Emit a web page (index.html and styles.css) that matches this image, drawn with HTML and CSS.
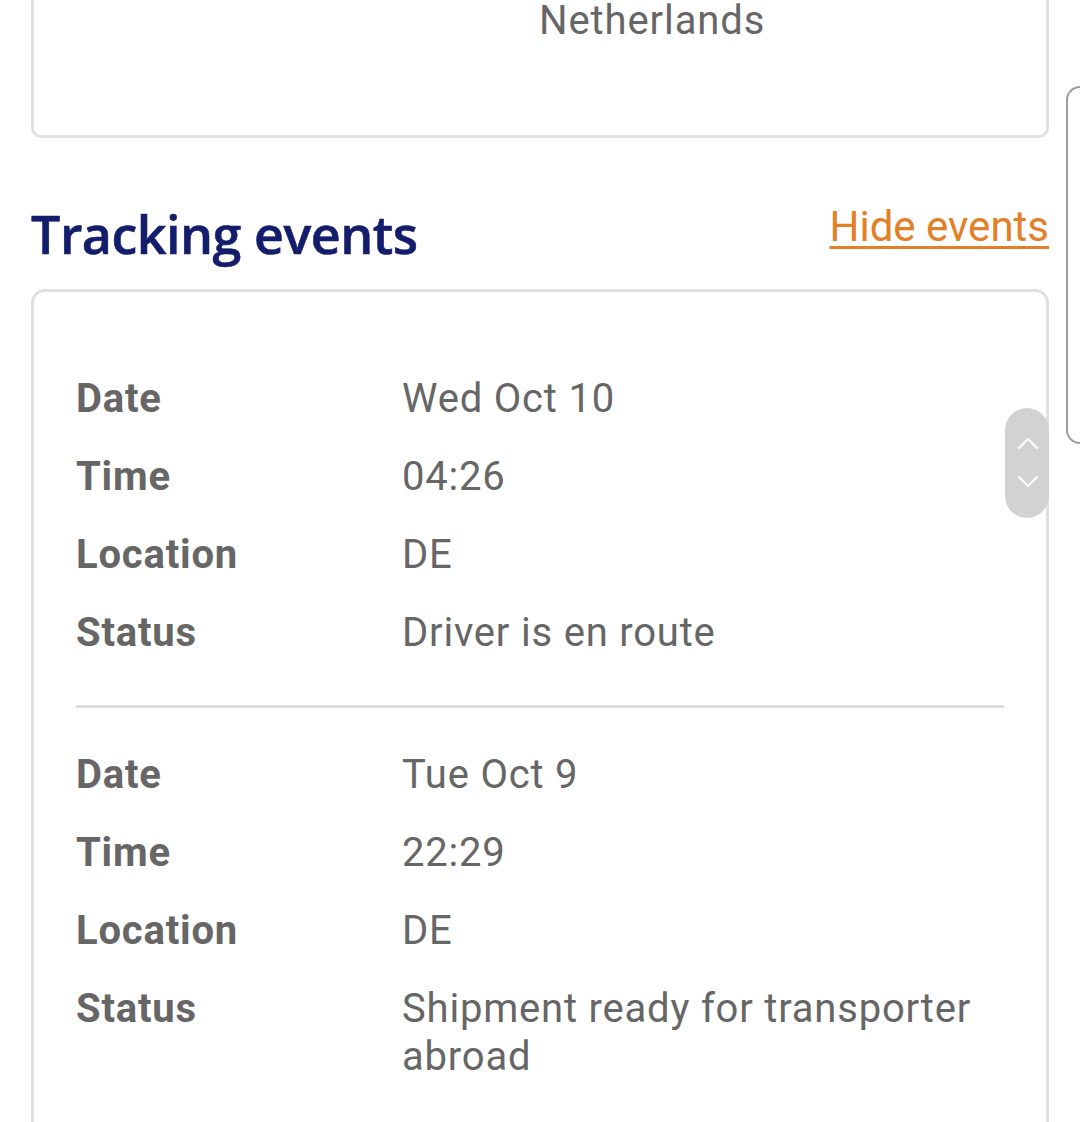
FILE: index.html
```html
<!DOCTYPE html>
<html lang="en">
<head>
<meta charset="utf-8">
<title>Tracking events</title>
<link rel="stylesheet" href="styles.css">
</head>
<body>
<div class="page">
  <div class="card card-top">
    <div class="country">Netherlands</div>
  </div>

  <div class="section-head">
    <h2 class="title">Tracking events</h2>
    <a class="toggle" href="#">Hide events</a>
  </div>

  <div class="card card-events">
    <div class="event">
      <div class="label">Date</div><div class="value">Wed Oct 10</div>
      <div class="label">Time</div><div class="value">04:26</div>
      <div class="label">Location</div><div class="value">DE</div>
      <div class="label">Status</div><div class="value">Driver is en route</div>
    </div>
    <div class="event">
      <div class="label">Date</div><div class="value">Tue Oct 9</div>
      <div class="label">Time</div><div class="value">22:29</div>
      <div class="label">Location</div><div class="value">DE</div>
      <div class="label">Status</div><div class="value">Shipment ready for transporter abroad</div>
    </div>
  </div>

  <div class="peek-card"></div>

  <div class="scroll-pill">
    <svg width="44" height="110" viewBox="0 0 44 110" aria-hidden="true">
      <path d="M14 40 L23 31 L32 40" fill="none" stroke="#fff" stroke-width="2" stroke-linecap="round" stroke-linejoin="round"/>
      <path d="M14 69 L23 78 L32 69" fill="none" stroke="#fff" stroke-width="2" stroke-linecap="round" stroke-linejoin="round"/>
    </svg>
  </div>
</div>
</body>
</html>
```

FILE: styles.css
```css
html, body {
  margin: 0;
  padding: 0;
  background: #ffffff;
}

body {
  font-family: Roboto, "Liberation Sans", Arial, sans-serif;
  color: #666666;
  overflow: hidden;
  height: 1122px;
}

.page {
  position: relative;
  display: flow-root;
  width: 1080px;
  height: 1122px;
  padding: 0 31px;
  box-sizing: border-box;
}

.card {
  border: 3px solid #e0e0e0;
  border-radius: 12px;
  background: #fff;
}

.card-top {
  margin-top: -40px;
  padding: 38px 0 94px 505px;
  border-radius: 10px;
}

.country {
  font-size: 40px;
  line-height: 40px;
  letter-spacing: 0.9px;
}

.section-head {
  display: flex;
  justify-content: space-between;
  align-items: flex-start;
  margin-top: 58px;
  height: 93px;
}

.title {
  margin: 0;
  font-family: "Open Sans", "Noto Sans", sans-serif;
  font-weight: 600;
  font-size: 52px;
  line-height: 76px;
  color: #141d6b;
  letter-spacing: -0.5px;
  -webkit-text-stroke: 0.6px #141d6b;
}

.toggle {
  font-size: 42px;
  line-height: 58px;
  margin-top: 2px;
  color: #e38027;
  text-decoration: underline;
  text-decoration-thickness: 3px;
  text-underline-offset: 5px;
}

.card-events {
  padding: 38px 42px 40px 42px;
  border-radius: 14px;
  height: 900px;
}

.event {
  display: grid;
  grid-template-columns: 326px 1fr;
  padding: 30px 0 33px;
}

.event + .event {
  border-top: 3px solid #dedede;
  padding-top: 28px;
}

.label,
.value {
  font-size: 40px;
  line-height: 48px;
  letter-spacing: 0.8px;
  padding: 15px 0;
}

.label {
  font-weight: 700;
}

.value {
  font-weight: 400;
}

.peek-card {
  position: absolute;
  left: 1066px;
  top: 86px;
  width: 40px;
  height: 354px;
  border: 2px solid #9e9e9e;
  border-right: none;
  border-radius: 14px 0 0 14px;
}

.scroll-pill {
  position: absolute;
  left: 1005px;
  top: 408px;
  width: 44px;
  height: 110px;
  border-radius: 22px;
  background: #d2d2d2;
}

.scroll-pill svg {
  display: block;
}
```
